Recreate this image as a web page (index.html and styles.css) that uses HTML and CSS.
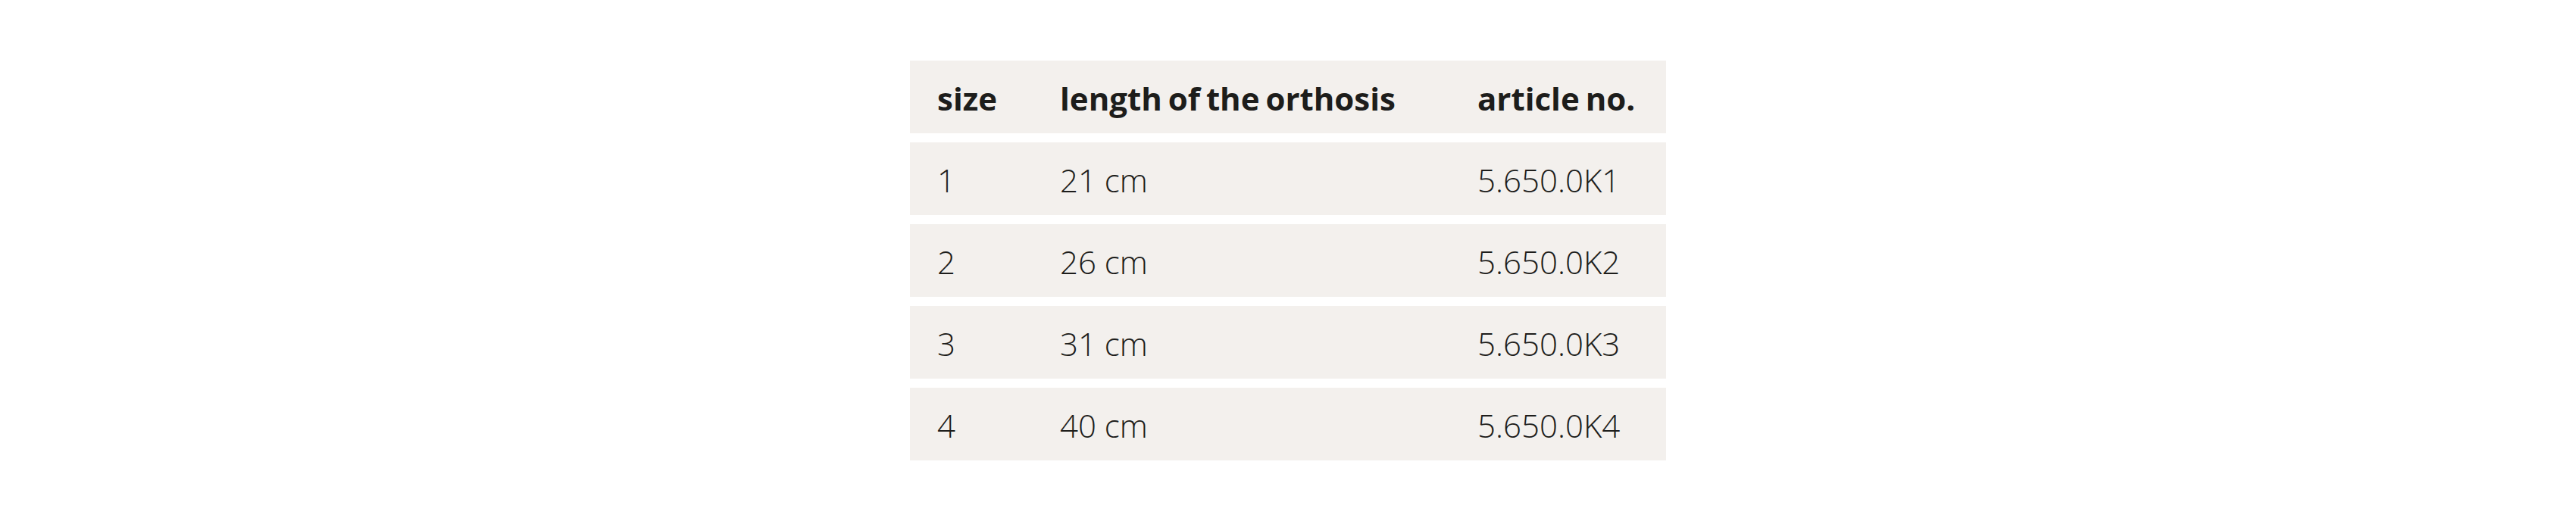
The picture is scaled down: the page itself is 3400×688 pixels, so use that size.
FILE: index.html
```html
<!DOCTYPE html>
<html lang="en">
<head>
<meta charset="utf-8">
<title>Orthosis sizes</title>
<link rel="stylesheet" href="styles.css">
</head>
<body>
<main class="page">
  <div class="size-table">
    <div class="row head">
      <div class="cell">size</div>
      <div class="cell">length of the orthosis</div>
      <div class="cell">article no.</div>
    </div>
    <div class="row">
      <div class="cell">1</div>
      <div class="cell">21 cm</div>
      <div class="cell">5.650.0K1</div>
    </div>
    <div class="row">
      <div class="cell">2</div>
      <div class="cell">26 cm</div>
      <div class="cell">5.650.0K2</div>
    </div>
    <div class="row">
      <div class="cell">3</div>
      <div class="cell">31 cm</div>
      <div class="cell">5.650.0K3</div>
    </div>
    <div class="row">
      <div class="cell">4</div>
      <div class="cell">40 cm</div>
      <div class="cell">5.650.0K4</div>
    </div>
  </div>
</main>
</body>
</html>
```

FILE: styles.css
```css
html, body {
  margin: 0;
  padding: 0;
  background: #ffffff;
}

.page {
  width: 3400px;
  height: 688px;
  padding-top: 80px;
  box-sizing: border-box;
  display: flex;
  justify-content: flex-start;
  padding-left: 1201px;
}

.size-table {
  width: 998px;
  display: flex;
  flex-direction: column;
  gap: 12px;
  font-family: "Open Sans", "Liberation Sans", sans-serif;
  font-size: 42px;
  font-weight: 300;
  color: #1d1d1b;
}

.row {
  display: grid;
  grid-template-columns: 162px 551px 285px;
  height: 96px;
  background: #f3f0ed;
}

.cell {
  padding: 3px 36px 0;
  display: flex;
  align-items: center;
  line-height: 57px;
  white-space: nowrap;
}

.head .cell {
  font-weight: 700;
  padding-top: 2px;
  word-spacing: -3px;
}
```
